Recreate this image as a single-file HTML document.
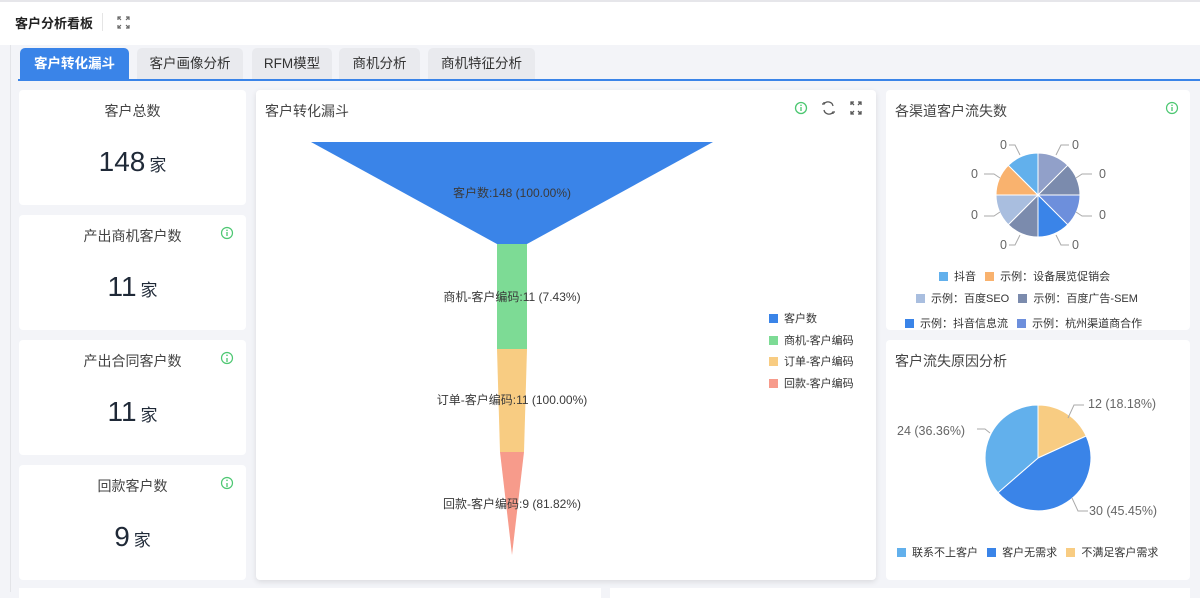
<!DOCTYPE html>
<html><head><meta charset="utf-8"><style>
*{margin:0;padding:0;box-sizing:border-box}
body{width:1200px;height:592px;overflow:hidden;background:#f3f4f8;font-family:"Liberation Sans","Noto Sans CJK SC",sans-serif;color:#333;position:relative}
.a{position:absolute}
.card{position:absolute;background:#fff;border-radius:4px}
.ttl{position:absolute;font-size:14px;color:#444}
.num{position:absolute;width:100%;text-align:center;color:#1f2937}
.num b{font-weight:normal;font-size:28px}
.num span{font-size:17px;margin-left:4px}
.tab{position:absolute;top:48px;height:32px;background:#e9eaee;border-radius:5px 5px 0 0;font-size:13.5px;color:#333;text-align:center;line-height:32px}
.lg{position:absolute;font-size:11px;color:#333;white-space:nowrap}
.sq{display:inline-block;width:9px;height:9px;vertical-align:-1px;margin-right:6px}
</style></head><body>
<div class="a" style="left:0;top:0;width:1200px;height:45px;background:#fff;border-top:2px solid #e6e6ea"></div>
<div class="a" style="left:15px;top:13px;font-size:13px;font-weight:bold;color:#222">客户分析看板</div>
<div class="a" style="left:102px;top:13px;width:1px;height:18px;background:#e5e5e5"></div>
<svg class="a" style="left:117px;top:16px" width="13" height="13" viewBox="0 0 13 13" fill="none" stroke="#666" stroke-width="1.2"><path d="M1 4V1h3M9 1h3v3M12 9v3H9M4 12H1V9M1 1l3 3M12 1L9 4M12 12L9 9M1 12l3-3"/></svg>
<div class="a" style="left:10px;top:45px;width:1px;height:547px;background:#e3e4e8"></div>

<div class="tab" style="left:20px;width:109px;background:#3a84e8;color:#fff;font-weight:bold">客户转化漏斗</div>
<div class="tab" style="left:137px;width:106px">客户画像分析</div>
<div class="tab" style="left:252px;width:80px">RFM模型</div>
<div class="tab" style="left:339px;width:81px">商机分析</div>
<div class="tab" style="left:428px;width:107px">商机特征分析</div>
<div class="a" style="left:18px;top:79px;width:1182px;height:2px;background:#3a84e8"></div>

<div class="card" style="left:19px;top:90px;width:227px;height:115px"><div class="ttl" style="width:100%;text-align:center;top:11px">客户总数</div><div class="num" style="top:56px"><b>148</b><span>家</span></div></div>
<div class="card" style="left:19px;top:215px;width:227px;height:115px"><div class="ttl" style="width:100%;text-align:center;top:11px">产出商机客户数</div><div class="num" style="top:56px"><b>11</b><span>家</span></div></div>
<div class="card" style="left:19px;top:340px;width:227px;height:115px"><div class="ttl" style="width:100%;text-align:center;top:11px">产出合同客户数</div><div class="num" style="top:56px"><b>11</b><span>家</span></div></div>
<div class="card" style="left:19px;top:465px;width:227px;height:115px"><div class="ttl" style="width:100%;text-align:center;top:11px">回款客户数</div><div class="num" style="top:56px"><b>9</b><span>家</span></div></div>
<svg class="a" style="left:0;top:0" width="250" height="592"><g fill="none" stroke="#4cc771" stroke-width="1.2"><circle cx="227" cy="233" r="5.5"/><circle cx="227" cy="358" r="5.5"/><circle cx="227" cy="483" r="5.5"/></g><g stroke="#4cc771" stroke-width="1.3"><path d="M227 232v4M227 358v4M227 483v4"/></g><g fill="#4cc771"><circle cx="227" cy="230.3" r=".8"/><circle cx="227" cy="355.3" r=".8"/><circle cx="227" cy="480.3" r=".8"/></g></svg>

<div class="card" style="left:256px;top:90px;width:620px;height:490px;box-shadow:0 2px 6px rgba(0,0,0,.1)"></div>
<div class="ttl" style="left:265px;top:101px">客户转化漏斗</div>
<svg class="a" style="left:256px;top:90px" width="620" height="490">
<g fill="none" stroke-width="1.3"><circle cx="545" cy="18" r="5.5" stroke="#4cc771"/><path d="M545 17v4" stroke="#4cc771"/><path d="M568 14a5 5 0 0 1 9 2M577 22a5 5 0 0 1-9-2" stroke="#555"/><path d="M566 14l2 0 0-2M579 22l-2 0 0 2" stroke="#555"/><path d="M595 15v-3h3M605 15v-3h-3M595 21v3h3M605 21v3h-3M595 12l3 3M605 12l-3 3M595 24l3-3M605 24l-3-3" stroke="#555"/></g>
<circle cx="545" cy="15.3" r=".8" fill="#4cc771"/>
<path d="M55 52H457L271 154H241Z" fill="#3a84e8"/>
<rect x="241" y="154" width="30" height="105" fill="#7ddb95"/>
<path d="M241 259H271L268 362H244Z" fill="#f8cc82"/>
<path d="M244 362H268L256 465Z" fill="#f79b8b"/>
<g font-size="12" fill="#3a3a3a" text-anchor="middle" font-family="Liberation Sans,Noto Sans CJK SC,sans-serif"><text x="256" y="107">客户数:148 (100.00%)</text><text x="256" y="211">商机-客户编码:11 (7.43%)</text><text x="256" y="314">订单-客户编码:11 (100.00%)</text><text x="256" y="418">回款-客户编码:9 (81.82%)</text></g>
</svg>
<div class="lg" style="left:769px;top:310px"><span class="sq" style="background:#3a84e8"></span>客户数</div>
<div class="lg" style="left:769px;top:332px"><span class="sq" style="background:#7ddb95"></span>商机-客户编码</div>
<div class="lg" style="left:769px;top:353px"><span class="sq" style="background:#f8cc82"></span>订单-客户编码</div>
<div class="lg" style="left:769px;top:375px"><span class="sq" style="background:#f79b8b"></span>回款-客户编码</div>

<div class="card" style="left:886px;top:90px;width:304px;height:240px;overflow:hidden">
<div class="ttl" style="left:9px;top:11px">各渠道客户流失数</div>
<div class="lg" style="left:53px;top:178px"><span class="sq" style="background:#62b0ec"></span>抖音 &nbsp;&nbsp;<span class="sq" style="background:#f9b26e"></span>示例：设备展览促销会</div>
<div class="lg" style="left:30px;top:200px"><span class="sq" style="background:#a9bedf"></span>示例：百度SEO &nbsp;&nbsp;<span class="sq" style="background:#7b8bad"></span>示例：百度广告-SEM</div>
<div class="lg" style="left:19px;top:225px"><span class="sq" style="background:#3a84e8"></span>示例：抖音信息流 &nbsp;&nbsp;<span class="sq" style="background:#6d8fdc"></span>示例：杭州渠道商合作</div>
</div>
<div class="card" style="left:886px;top:340px;width:304px;height:240px">
<div class="ttl" style="left:9px;top:11px">客户流失原因分析</div>
<div class="lg" style="left:11px;top:204px"><span class="sq" style="background:#62b0ec"></span>联系不上客户 &nbsp;&nbsp;<span class="sq" style="background:#3a84e8"></span>客户无需求 &nbsp;&nbsp;<span class="sq" style="background:#f8cc82"></span>不满足客户需求</div>
</div>
<svg class="a" style="left:880px;top:90px" width="320" height="500">
<circle cx="292" cy="18" r="5.5" fill="none" stroke="#4cc771" stroke-width="1.2"/><path d="M292 17v4" stroke="#4cc771" stroke-width="1.3"/><circle cx="292" cy="15.3" r=".8" fill="#4cc771"/>
<g stroke="#fff" stroke-width="1" transform="translate(-880,-90)">
<path d="M1038 195L1038 153A42 42 0 0 1 1067.7 165.3Z" fill="#91a0c9"/>
<path d="M1038 195L1067.7 165.3A42 42 0 0 1 1080 195Z" fill="#7b8bad"/>
<path d="M1038 195L1080 195A42 42 0 0 1 1067.7 224.7Z" fill="#6d8fdc"/>
<path d="M1038 195L1067.7 224.7A42 42 0 0 1 1038 237Z" fill="#3a84e8"/>
<path d="M1038 195L1038 237A42 42 0 0 1 1008.3 224.7Z" fill="#7b8bad"/>
<path d="M1038 195L1008.3 224.7A42 42 0 0 1 996 195Z" fill="#a9bedf"/>
<path d="M1038 195L996 195A42 42 0 0 1 1008.3 165.3Z" fill="#f9b26e"/>
<path d="M1038 195L1008.3 165.3A42 42 0 0 1 1038 153Z" fill="#62b0ec"/>
<path d="M1038 458L1038 405A53 53 0 0 1 1086.2 436Z" fill="#f8cc82"/>
<path d="M1038 458L1086.2 436A53 53 0 0 1 998 492.7Z" fill="#3a84e8"/>
<path d="M1038 458L998 492.7A53 53 0 0 1 1038 405Z" fill="#62b0ec"/>
</g>
<g fill="none" stroke="#aaa" stroke-width="1" transform="translate(-880,-90)">
<path d="M1056 155l5-10h8M1076 178l6-4h10M1076 212l6 4h10M1056 235l5 10h8M1020 235l-5 10h-6M1000 212l-6 4h-10M1000 178l-6-4h-10M1020 155l-5-10h-6"/>
<path d="M1068 418l6-13h10M1072 498l6 13h10M990 433l-5-4h-8"/>
</g>
<g font-size="12.5" fill="#666" font-family="Liberation Sans,sans-serif" transform="translate(-880,-90)">
<text x="1072" y="149">0</text><text x="1099" y="178">0</text><text x="1099" y="219">0</text><text x="1072" y="249">0</text><text x="1000" y="249">0</text><text x="971" y="219">0</text><text x="971" y="178">0</text><text x="1000" y="149">0</text>
<text x="1088" y="408">12 (18.18%)</text><text x="1089" y="515">30 (45.45%)</text><text x="897" y="435">24 (36.36%)</text>
</g>
</svg>
<div class="a" style="left:19px;top:588px;width:582px;height:10px;background:#fff"></div>
<div class="a" style="left:610px;top:588px;width:580px;height:10px;background:#fff"></div>
</body></html>
